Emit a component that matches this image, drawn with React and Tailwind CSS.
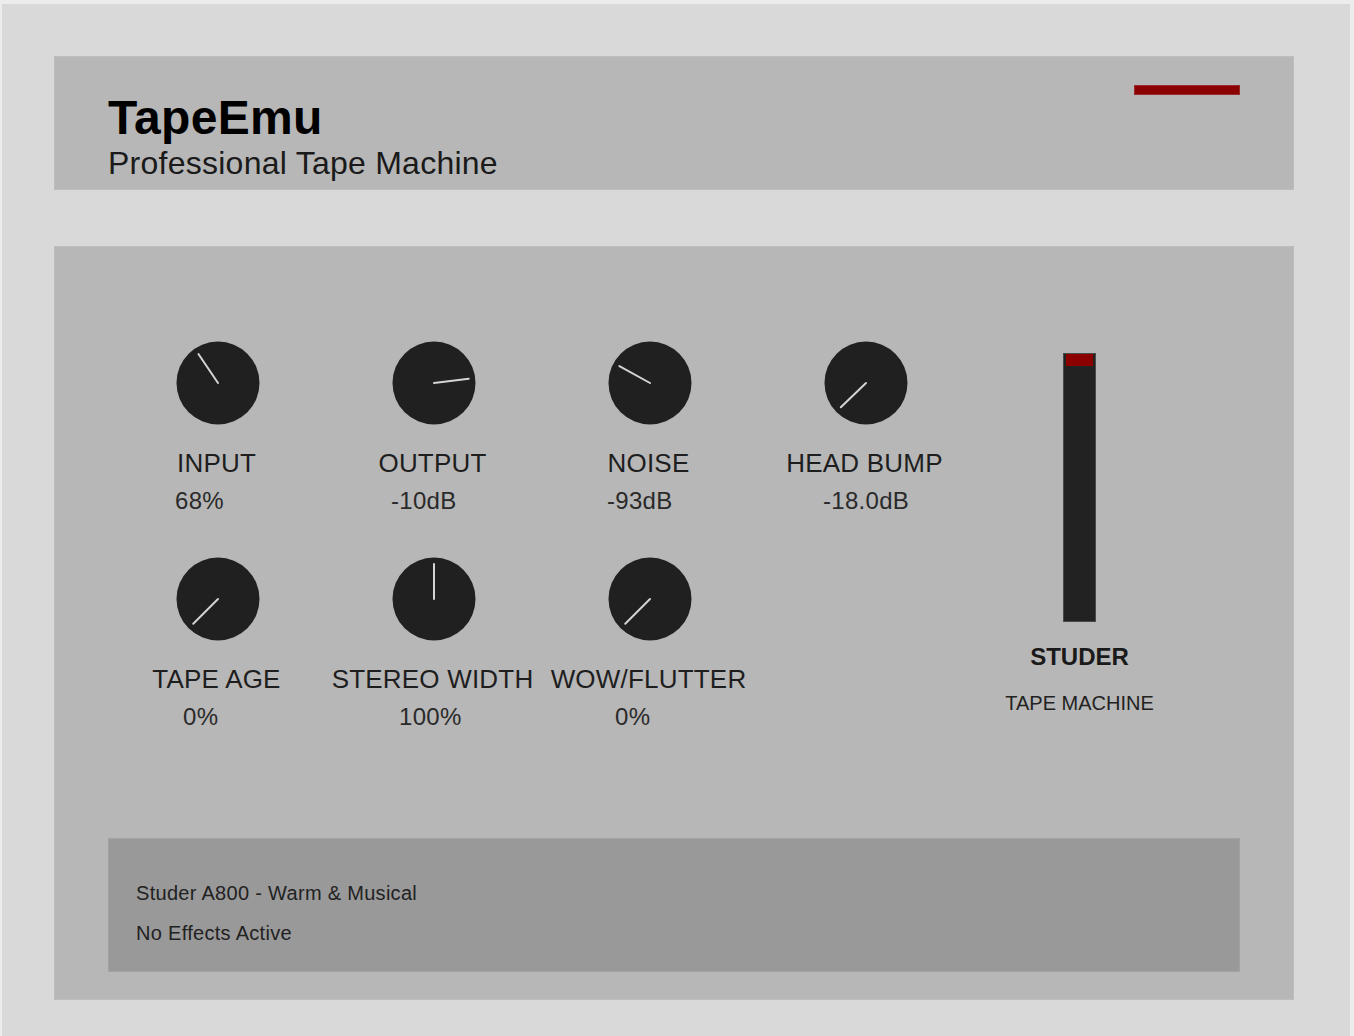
const knobRows = [
  [
    { label: 'INPUT', value: '68%', angle: -34 },
    { label: 'OUTPUT', value: '-10dB', angle: 83 },
    { label: 'NOISE', value: '-93dB', angle: -61 },
    { label: 'HEAD BUMP', value: '-18.0dB', angle: -134 },
  ],
  [
    { label: 'TAPE AGE', value: '0%', angle: -135 },
    { label: 'STEREO WIDTH', value: '100%', angle: 0 },
    { label: 'WOW/FLUTTER', value: '0%', angle: -135 },
  ],
]

function Knob({ angle }) {
  const rad = (angle * Math.PI) / 180
  const x2 = 42 + 35 * Math.sin(rad)
  const y2 = 42 - 35 * Math.cos(rad)
  return (
    <svg width="84" height="84" viewBox="0 0 84 84" className="block">
      <circle cx="42" cy="42" r="41.5" fill="#202020" />
      <line x1="42" y1="42" x2={x2} y2={y2} stroke="#d4d4d4" strokeWidth="2" strokeLinecap="round" />
    </svg>
  )
}

function KnobCell({ knob, valuePad }) {
  return (
    <div className="flex flex-col items-center h-[216px]">
      <Knob angle={knob.angle} />
      <div className="mt-[25px] text-[26px] leading-[26px] text-[#1e1e1e] whitespace-nowrap tracking-[0.2px] pr-[3px]">{knob.label}</div>
      <div className={`self-stretch mt-[13px] text-[24px] leading-[24px] text-[#2a2a2a] tracking-[0.3px] ${valuePad}`}>{knob.value}</div>
    </div>
  )
}

export default function App() {
  return (
    <div className="min-h-screen bg-[#ececec] pt-[4px] pl-[2px] pr-[4px] font-['Liberation_Sans',Arial,sans-serif]">
      <div className="bg-[#d9d9d9] min-h-[1032px] pt-[52px] pl-[52px] pr-[56px]">
        <div className="h-[134px] bg-[#b7b7b7] border border-[#bebebe] flex justify-between pl-[53px] pr-[53px] pt-[37px]">
          <div>
            <div className="text-[48px] leading-[48px] font-bold text-black tracking-[0.3px]">TapeEmu</div>
            <div className="mt-[5px] text-[32px] leading-[32px] text-[#1a1a1a] tracking-[0.25px]">Professional Tape Machine</div>
          </div>
          <div className="mt-[-9px] w-[106px] h-[10px] bg-[#8b0000] border border-[#9a2a2a]" />
        </div>

        <div className="mt-[56px] h-[754px] bg-[#b7b7b7] border border-[#bebebe] flex flex-col pt-[94px] px-[53px] pb-[27px]">
          <div className="flex ml-[2px]">
            <div className="grid grid-cols-[repeat(4,216px)]">
              {knobRows[0].map((k) => (
                <KnobCell key={k.label} knob={k} valuePad="pl-[65px]" />
              ))}
              {knobRows[1].map((k) => (
                <KnobCell key={k.label} knob={k} valuePad="pl-[73px]" />
              ))}
            </div>
            <div className="w-[211px] flex flex-col items-center pt-[12px]">
              <div className="w-[33px] h-[269px] bg-[#222222] border border-[#4a4a4a] px-[2px]">
                <div className="h-[12px] bg-[#8b0000]" />
              </div>
              <div className="mt-[23px] text-[24px] leading-[24px] font-bold text-[#1a1a1a]">STUDER</div>
              <div className="mt-[24px] text-[20px] leading-[20px] text-[#222222]">TAPE MACHINE</div>
            </div>
          </div>

          <div className="mt-auto h-[134px] bg-[#999999] border border-[#a2a2a2] pt-[44px] pl-[27px] text-[20px] leading-[20px] text-[#222222] tracking-[0.3px]">
            <div>Studer A800 - Warm &amp; Musical</div>
            <div className="mt-[20px]">No Effects Active</div>
          </div>
        </div>
      </div>
    </div>
  )
}
